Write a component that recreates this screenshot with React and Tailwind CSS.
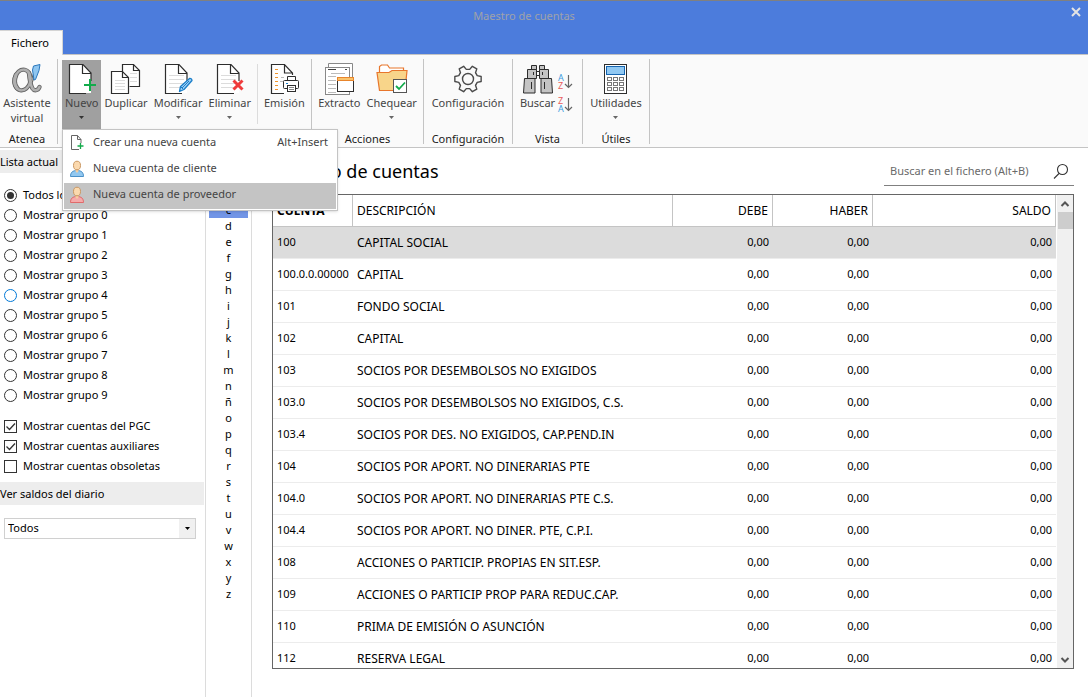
import React from "react";

const INK = "#2d2d2d";

function Svg({ w = 32, h = 32, children, className = "" }) {
  return (
    <svg width={w} height={h} viewBox={`0 0 ${w} ${h}`} fill="none" aria-hidden="true" className={"shrink-0 " + className}>
      {children}
    </svg>
  );
}

function PageLines({ x, y, w, n, step = 4, color = "#dcdcdc" }) {
  return Array.from({ length: n }, (_, i) => (
    <path key={i} d={`M${x} ${y + i * step + 0.5}h${w}`} stroke={color} />
  ));
}

function AlphaStrokes({ color, extra }) {
  return (
    <g stroke={color} strokeLinecap="round">
      <ellipse cx="11.5" cy="17" rx="8" ry="10.500" transform="rotate(12 11.5 17)" strokeWidth={2.4 + extra} />
      <path d="M5 12c-2 5-1.500 10 1 13" strokeWidth={3 + extra} />
      <path d="M18 10c.5 7 1.500 12 3.500 15.500 1.500 2.500 5.500 2.500 7-1.500" strokeWidth={2.6 + extra} />
      <path d="M23 12c-2 7-5 12-9 15" strokeWidth={1 + extra} />
    </g>
  );
}

function AlphaIcon() {
  return (
    <Svg>
      <AlphaStrokes color="#666" extra={1.8} />
      <AlphaStrokes color="#b0b0b0" extra={0} />
      <path d="M22.500 3l6.500-1.500-1 6-3.500 9-1.500.5-1.500-10z" fill="#8fc6f0" stroke="#2b78bd" />
    </Svg>
  );
}

function BigPage({ children, lines }) {
  return (
    <Svg>
      <path d="M3 1.5h14l8 8.5v20H3z" fill="#fff" />
      {lines && <PageLines x={7} y={12} w={15} n={4} />}
      <path d="M25 18V10l-8-8.5H3.5v29H20" stroke={INK} strokeWidth="1.2" />
      <path d="M16.5 2v8.5H25" stroke={INK} strokeWidth="1.2" />
      {children}
    </Svg>
  );
}

function NewIcon() {
  return (
    <BigPage>
      <path d="M24 16v12M18 22h12" stroke="#13ab4b" strokeWidth="2" />
    </BigPage>
  );
}

function CopyIcon() {
  return (
    <Svg>
      <path d="M12.5 8V1.5h11l6 6v16h-10" fill="#fff" stroke={INK} strokeWidth="1.2" />
      <path d="M23.500 1.500v6h6" stroke={INK} strokeWidth="1.2" />
      <PageLines x={20} y={10} w={7} n={3} />
      <path d="M1.500 8.500h11l6 6v16h-17z" fill="#fff" stroke={INK} strokeWidth="1.200" />
      <path d="M12.500 8.500v6h6" stroke={INK} strokeWidth="1.200" />
      <PageLines x={5} y={17} w={10} n={4} step={3} />
    </Svg>
  );
}

function EditIcon() {
  return (
    <BigPage lines>
      <path d="M17.500 28.500l1-5 9-8q2-.5 2.500 2l-8 9z" fill="#9fd0f5" stroke="#1c7fc9" strokeWidth="1.300" strokeLinejoin="round" />
      <path d="M18.500 23.500l3 3M20 25l7-7" stroke="#1c7fc9" />
    </BigPage>
  );
}

function DeleteIcon() {
  return (
    <BigPage lines>
      <path d="M19.500 17.500l9 9M28.500 17.500l-9 9" stroke="#ef3b3b" strokeWidth="3" />
    </BigPage>
  );
}

function PrintIcon() {
  return (
    <Svg>
      <path d="M3 1.500h14l8 8.500v20H3z" fill="#fff" />
      <path d="M24.500 12V10l-8-8.500h-13v29H16M16.500 1.500v8.500h8" stroke={INK} strokeWidth="1.200" />
      <PageLines x={7} y={6} w={3} n={6} color="#f0962e" />
      <PageLines x={13} y={14} w={3} n={1} color="#bbb" />
      <PageLines x={12} y={18} w={3} n={1} color="#bbb" />
      <path d="M19.500 17.500v-4h8v4" fill="#fff" stroke={INK} />
      <rect x="15.500" y="17.500" width="15" height="8" rx="1" fill="#fff" stroke={INK} />
      <path d="M18 20.500h2" stroke="#1c7fc9" />
      <rect x="19.500" y="22.500" width="8" height="6" fill="#fff" stroke={INK} />
      <path d="M21 24.500h5M21 26.500h5" stroke="#888" />
    </Svg>
  );
}

function ExtractIcon() {
  return (
    <Svg>
      <path d="M5.500 4V.5h24V14" fill="#fff" stroke="#888" />
      <rect x="2.500" y="4.500" width="24" height="27" fill="#fff" stroke="#888" />
      <path d="M5 6.500h8M22 6.500h2" stroke="#444" />
      <PageLines x={8} y={10} w={14} n={1} color="#bbb" />
      <PageLines x={5} y={13} w={8} n={5} color="#bbb" />
      <path d="M27 14h4v15H15V14z" fill="#fff" />
      <rect x="14.500" y="17.500" width="16" height="11" fill="#fff" stroke={INK} />
      <rect x="14.500" y="14.500" width="16" height="3" fill="#f9c26b" stroke="#e8852c" />
    </Svg>
  );
}

function FolderIcon() {
  return (
    <Svg>
      <path d="M3.500 9V3.500l2-1.500h6l2 3h14v5" fill="#fff" stroke="#e8762c" strokeWidth="1.200" />
      <path d="M1 9.500h12l3-2h15l-2 20H3.500z" fill="#f8d58a" stroke="#e8762c" strokeWidth="1.200" />
      <rect x="17.500" y="16.500" width="13" height="13" fill="#fff" stroke="#555" />
      <path d="M20 23l3 3 6-6.500" stroke="#13ab4b" strokeWidth="1.800" />
    </Svg>
  );
}

function gearPath(cx, cy) {
  const pts = [];
  for (let i = 0; i < 6; i++) {
    [[-20, 9.8], [-11, 13.4], [11, 13.4], [20, 9.8]].forEach(([d, r]) => {
      const a = ((i * 60 + d) * Math.PI) / 180;
      pts.push(`${(cx + r * Math.cos(a)).toFixed(2)} ${(cy + r * Math.sin(a)).toFixed(2)}`);
    });
  }
  return "M" + pts.join("L") + "Z";
}

function GearIcon() {
  return (
    <Svg>
      <path d={gearPath(16, 16)} stroke="#4a4a4a" strokeWidth="1.400" strokeLinejoin="round" />
      <circle cx="16" cy="16" r="5.500" stroke="#4a4a4a" strokeWidth="1.400" />
    </Svg>
  );
}

function BinocularsIcon() {
  return (
    <Svg>
      <g fill="#c4c4c4" stroke={INK}>
        <path d="M9.500 2.500h5v4h-5zM17.500 2.500h5v4h-5z" />
        <path d="M14 8.500h4v4h-4z" fill="#fff" />
        <path d="M5.500 6.500h9v9h-9zM17.500 6.500h9v9h-9z" />
        <path d="M2.500 15.500h10.500v14.500h-11.500zM19 15.500h10.500l1 14.500h-11.500z" />
      </g>
      <path d="M11.500 9v3M20.500 9v3M9.500 19v7M22.500 19v7" stroke={INK} />
    </Svg>
  );
}

function SortIcon({ first, second, firstClass, secondClass }) {
  return (
    <Svg w={16} h={16} className="overflow-visible">
      <text x="0" y="7" fontSize="9" fontFamily="Noto Sans, sans-serif" className={firstClass}>{first}</text>
      <text x="0" y="15" fontSize="9" fontFamily="Noto Sans, sans-serif" className={secondClass}>{second}</text>
      <path d="M10.500 1v12M7 10l3.500 3.500 3.500-3.500" stroke="#666" strokeWidth="1.200" />
    </Svg>
  );
}

function CalcIcon() {
  return (
    <Svg>
      <rect x="4.500" y="1.500" width="22" height="29" fill="#fff" stroke={INK} />
      <rect x="6.500" y="3.500" width="18" height="8" fill="#90c8f2" stroke="#1565b0" />
      {[0, 1, 2].map((r) =>
        [0, 1, 2].map((c) => (
          <rect key={`${r}${c}`} x={7.5 + c * 6} y={14.5 + r * 5} width="4" height="3" stroke="#777" />
        ))
      )}
    </Svg>
  );
}

function SmallPageIcon() {
  return (
    <Svg w={16} h={18}>
      <path d="M10 15.500H2.500V1.500h6l3.500 4V9" fill="#fff" stroke="#666" />
      <path d="M8.500 1.500v4H12" stroke="#666" />
      <path d="M11.500 9v6M8.500 12h6" stroke="#13ab4b" strokeWidth="1.300" />
    </Svg>
  );
}

function PersonIcon({ body, line }) {
  return (
    <Svg w={16} h={18}>
      <path d="M1.500 16.500c0-4 2-6 6.500-6s6.500 2 6.500 6z" fill={body} stroke={line} />
      <path d="M6.500 9v2l1.500 2 1.500-2V9z" fill="#f8cfa0" />
      <ellipse cx="8" cy="5.500" rx="3.500" ry="4.300" fill="#fbd9ae" stroke="#c99762" />
    </Svg>
  );
}

function Arrow({ className = "text-[#666]" }) {
  return (
    <Svg w={5} h={3} className={className}>
      <path d="M0 0h5L2.500 3z" fill="currentColor" />
    </Svg>
  );
}

function RibbonButton({ icon, label, arrow, active, second }) {
  return (
    <button
      type="button"
      className={
        "flex h-[69px] flex-col items-center px-[3px] pt-[3px] text-center leading-[15px] whitespace-nowrap text-[#444] " +
        (active ? "bg-[#a0a0a0]" : "")
      }
    >
      {icon}
      <span>{label}</span>
      {second && <span>{second}</span>}
      {arrow && (
        <span className="flex h-[15px] items-center">
          <Arrow className={active ? "text-[#333]" : "text-[#666]"} />
        </span>
      )}
    </button>
  );
}

function Group({ label, children, className }) {
  return (
    <section className={"flex shrink-0 flex-col justify-between pt-1 " + className}>
      <div className="flex justify-center">{children}</div>
      <div className="pb-px text-center leading-[15px] text-[#1a1a1a]">{label}</div>
    </section>
  );
}

const Rule = () => <div className="mt-[3px] h-[85px] w-px shrink-0 bg-[#c4c4c4]" />;

function MenuItem({ icon, label, hint, active }) {
  return (
    <button
      type="button"
      role="menuitem"
      className={
        "flex h-[26px] w-full items-center gap-2 pr-2 pb-[3px] pl-[5px] text-left text-[#444] " + (active ? "bg-[#c4c4c4]" : "bg-white")
      }
    >
      {icon}
      <span className="grow">{label}</span>
      <span>{hint}</span>
    </button>
  );
}

function Ribbon() {
  return (
    <div className="flex h-[94px] shrink-0 border-y border-[#c4c4c4] bg-[#fafafa] pt-px text-[11px]">
      <Group label="Atenea" className="w-[57px] pr-[3px]">
        <RibbonButton icon={<AlphaIcon />} label="Asistente" second="virtual" />
      </Group>
      <Rule />
      <Group label="" className="w-[253px]">
        <div className="flex w-full pl-1">
          <div className="relative z-10">
            <RibbonButton icon={<NewIcon />} label="Nuevo" arrow active />
            <div role="menu" className="absolute top-full left-0 w-[276px] border border-[#c4c4c4] bg-white p-px text-[11px] shadow-sm">
              <MenuItem icon={<SmallPageIcon />} label="Crear una nueva cuenta" hint="Alt+Insert" />
              <MenuItem icon={<PersonIcon body="#92c8f0" line="#4a90c8" />} label="Nueva cuenta de cliente" />
              <MenuItem icon={<PersonIcon body="#f5aaaa" line="#e06a6a" />} label="Nueva cuenta de proveedor" active />
            </div>
          </div>
          <RibbonButton icon={<CopyIcon />} label="Duplicar" />
          <RibbonButton icon={<EditIcon />} label="Modificar" arrow />
          <RibbonButton icon={<DeleteIcon />} label="Eliminar" arrow />
          <div className="mx-[3px] mt-1 h-[60px] w-px bg-[#dcdcdc]" />
          <RibbonButton icon={<PrintIcon />} label="Emisión" />
        </div>
      </Group>
      <Rule />
      <Group label="Acciones" className="w-[111px]">
        <RibbonButton icon={<ExtractIcon />} label="Extracto" />
        <RibbonButton icon={<FolderIcon />} label="Chequear" arrow />
      </Group>
      <Rule />
      <Group label="Configuración" className="w-[88px]">
        <RibbonButton icon={<GearIcon />} label="Configuración" />
      </Group>
      <Rule />
      <Group label="Vista" className="w-[69px]">
        <RibbonButton icon={<BinocularsIcon />} label="Buscar" />
        <div className="flex flex-col gap-[7px] pt-[14px] pr-1">
          <button type="button" aria-label="Orden ascendente">
            <SortIcon first="A" second="Z" firstClass="fill-[#3d9be0]" secondClass="fill-[#e85c5c]" />
          </button>
          <button type="button" aria-label="Orden descendente">
            <SortIcon first="Z" second="A" firstClass="fill-[#e85c5c]" secondClass="fill-[#3d9be0]" />
          </button>
        </div>
      </Group>
      <Rule />
      <Group label="Útiles" className="w-[66px]">
        <RibbonButton icon={<CalcIcon />} label="Utilidades" arrow />
      </Group>
      <Rule />
    </div>
  );
}

const groups = ["Todos los grupos", ...Array.from({ length: 10 }, (_, i) => `Mostrar grupo ${i}`)];
const checks = [
  ["Mostrar cuentas del PGC", true],
  ["Mostrar cuentas auxiliares", true],
  ["Mostrar cuentas obsoletas", false],
];

function Sidebar() {
  return (
    <aside className="w-[206px] shrink-0 border-r border-[#dcdcdc] pt-[2px] pr-px text-[11px] text-black">
      <h2 className="h-[23px] bg-[#ededed] leading-[23px]">Lista actual</h2>
      <div className="mt-3 pl-1">
        {groups.map((g, i) => (
          <label key={g} className="flex h-5 items-center gap-1.5">
            <span className="grid size-[13px] place-items-center">
              <input
                type="radio"
                name="grupo"
                defaultChecked={i === 0}
                className={
                  "peer col-start-1 row-start-1 size-[13px] appearance-none rounded-full border bg-white " +
                  (i === 5 ? "border-[#0078d7]" : "border-[#333]")
                }
              />
              <span className="pointer-events-none col-start-1 row-start-1 hidden size-[7px] rounded-full bg-[#333] peer-checked:block" />
            </span>
            {g}
          </label>
        ))}
      </div>
      <div className="mt-[11px] pl-1">
        {checks.map(([c, on]) => (
          <label key={c} className="flex h-5 items-center gap-1.5">
            <span className="grid size-[13px] place-items-center">
              <input type="checkbox" defaultChecked={on} className="peer col-start-1 row-start-1 size-[13px] appearance-none border border-[#333] bg-white" />
              <Svg w={11} h={11} className="pointer-events-none col-start-1 row-start-1 hidden peer-checked:block">
                <path d="M1.500 5.500l3 3 5.500-6" stroke="#333" strokeWidth="1.300" />
              </Svg>
            </span>
            {c}
          </label>
        ))}
      </div>
      <h2 className="mt-1.5 h-[23px] bg-[#ededed] leading-[23px]">
        <label htmlFor="saldos">Ver saldos del diario</label>
      </h2>
      <div className="mt-[13px] mr-2 ml-1 grid h-[21px] border border-[#d0d0d0]">
        <select id="saldos" className="col-start-1 row-start-1 w-full appearance-none bg-white pl-[3px] outline-none">
          <option>Todos</option>
        </select>
        <span className="pointer-events-none col-start-1 row-start-1 flex w-4 items-center justify-center justify-self-end bg-[#f0f0f0]">
          <Arrow className="text-black" />
        </span>
      </div>
    </aside>
  );
}

const letters = "abcdefghijklmnñopqrstuvwxyz".split("");

function Alphabet() {
  return (
    <nav className="w-[46px] shrink-0 border-r border-[#dcdcdc] px-[3px] pt-[22px] text-[11px]">
      {letters.map((l) => (
        <button
          key={l}
          type="button"
          className={"block h-4 w-full text-center leading-4 text-black " + (l === "c" ? "bg-[#7295e6]" : "")}
        >
          {l}
        </button>
      ))}
    </nav>
  );
}

const rows = [
  ["100", "CAPITAL SOCIAL"],
  ["100.0.0.00000", "CAPITAL"],
  ["101", "FONDO SOCIAL"],
  ["102", "CAPITAL"],
  ["103", "SOCIOS POR DESEMBOLSOS NO EXIGIDOS"],
  ["103.0", "SOCIOS POR DESEMBOLSOS NO EXIGIDOS, C.S."],
  ["103.4", "SOCIOS POR DES. NO EXIGIDOS, CAP.PEND.IN"],
  ["104", "SOCIOS POR APORT. NO DINERARIAS PTE"],
  ["104.0", "SOCIOS POR APORT. NO DINERARIAS PTE C.S."],
  ["104.4", "SOCIOS POR APORT. NO DINER. PTE, C.P.I."],
  ["108", "ACCIONES O PARTICIP. PROPIAS EN SIT.ESP."],
  ["109", "ACCIONES O PARTICIP PROP PARA REDUC.CAP."],
  ["110", "PRIMA DE EMISIÓN O ASUNCIÓN"],
  ["112", "RESERVA LEGAL"],
];

function Accounts() {
  return (
    <div className="flex min-h-0 min-w-0 grow border border-[#666]">
      <div className="min-w-0 grow overflow-hidden pr-px">
        <table className="w-full table-fixed border-separate border-spacing-0 text-[12px] text-black">
          <colgroup>
            <col className="w-20" />
            <col className="w-80" />
            <col className="w-[100px]" />
            <col className="w-[100px]" />
            <col />
          </colgroup>
          <thead>
            <tr className="h-8 [&>th]:border-r [&>th]:border-b [&>th]:border-[#c4c4c4] [&>th]:p-0 [&>th]:px-1 [&>th]:font-normal">
              <th className="text-left"><b>CUENTA</b></th>
              <th className="text-left">DESCRIPCIÓN</th>
              <th className="text-right">DEBE</th>
              <th className="text-right">HABER</th>
              <th className="text-right">SALDO</th>
            </tr>
          </thead>
          <tbody>
            {rows.map(([n, d], i) => (
              <tr
                key={n}
                className={
                  "h-8 whitespace-nowrap [&>td]:border-b [&>td]:border-[#ececec] [&>td]:p-0 [&>td]:px-1 " + (i === 0 ? "bg-[#dcdcdc]" : "")
                }
              >
                <td className="text-[11px]">{n}</td>
                <td>{d}</td>
                <td className="text-right text-[11px]">0,00</td>
                <td className="text-right text-[11px]">0,00</td>
                <td className="text-right text-[11px]">0,00</td>
              </tr>
            ))}
          </tbody>
        </table>
      </div>
      <div className="flex w-4 shrink-0 flex-col items-center bg-[#f0f0f0]">
        <Svg w={16} h={17}>
          <path d="M4.500 11L8 7.500l3.500 3.500" stroke="#555" strokeWidth="2" />
        </Svg>
        <div className="h-[17px] w-[15px] bg-[#cdcdcd]" />
        <div className="grow" />
        <Svg w={16} h={17}>
          <path d="M4.500 7L8 10.500 11.500 7" stroke="#555" strokeWidth="2" />
        </Svg>
      </div>
    </div>
  );
}

export default function App() {
  return (
    <div className="flex h-screen flex-col overflow-hidden bg-white font-['Noto_Sans',sans-serif]">
      <header className="grid h-[54px] shrink-0 border-t border-[#808080] bg-[#4c7cdc]">
        <div className="col-start-1 row-start-1 pr-10 pt-[7px] text-center text-[11px] leading-4 text-[#9fa2aa]">Maestro de cuentas</div>
        <button type="button" aria-label="Cerrar" className="col-start-1 row-start-1 mt-[5px] mr-[6px] self-start justify-self-end">
          <Svg w={12} h={12}>
            <path d="M2 2l8 8M10 2l-8 8" stroke="#e4e4e4" strokeWidth="2" />
          </Svg>
        </button>
        <button type="button" className="z-10 col-start-1 row-start-1 -mb-px h-[25px] w-[63px] self-end justify-self-start border-t border-r border-[#d4d4d4] bg-[#fafafa] pr-[2px] text-[11px] text-black">
          Fichero
        </button>
      </header>
      <Ribbon />
      <div className="flex min-h-0 grow">
        <Sidebar />
        <Alphabet />
        <main className="flex min-w-0 grow flex-col pr-[14px] pb-7 pl-5">
          <div className="mb-2 flex h-[38px] shrink-0 items-end justify-between">
            <h1 className="pb-[3px] text-[18px] leading-6 text-black">Maestro de cuentas</h1>
            <div className="flex w-[190px] items-center border-b border-[#808080] pr-[5px] pb-1.5 pl-1.5">
              <input type="search" aria-label="Buscar en el fichero" placeholder="Buscar en el fichero (Alt+B)" className="w-0 grow text-[11px] leading-4 outline-none placeholder:text-[#6a6a6a]" />
              <Svg w={16} h={16}>
                <circle cx="9.500" cy="6.500" r="5" stroke="#333" strokeWidth="1.100" />
                <path d="M6 10.500L1 15.500" stroke="#333" strokeWidth="1.100" />
              </Svg>
            </div>
          </div>
          <Accounts />
        </main>
      </div>
    </div>
  );
}
